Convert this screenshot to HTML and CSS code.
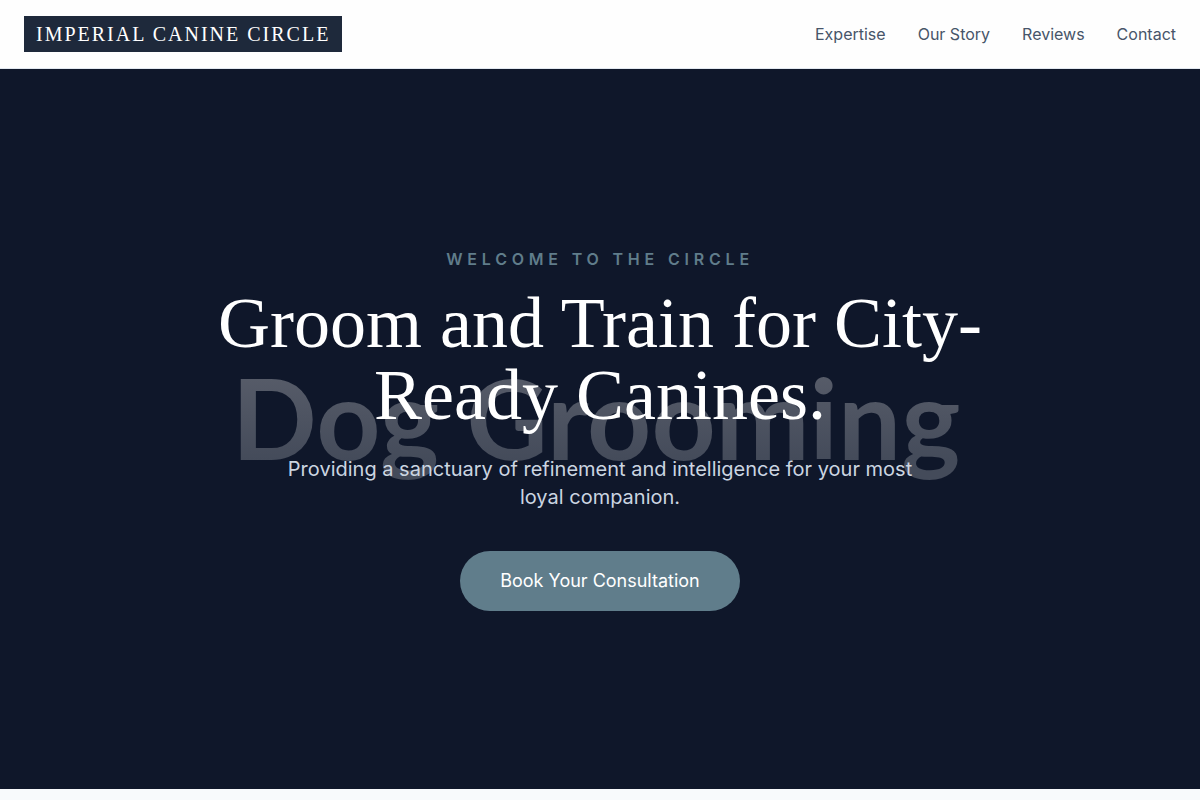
FILE: index.html
```html
<!DOCTYPE html>
<html lang="en">
<head>
<meta charset="utf-8">
<meta name="viewport" content="width=device-width, initial-scale=1">
<title>Imperial Canine Circle</title>
<link rel="stylesheet" href="styles.css">
</head>
<body>
<header class="site-header">
  <a class="brand" href="#top">IMPERIAL CANINE CIRCLE</a>
  <nav class="site-nav" aria-label="Main">
    <a href="#expertise">Expertise</a>
    <a href="#story">Our Story</a>
    <a href="#reviews">Reviews</a>
    <a href="#contact">Contact</a>
  </nav>
</header>
<main id="top">
  <section class="hero">
    <div class="hero-backdrop" aria-hidden="true"><span class="backdrop-word">Dog Grooming</span></div>
    <div class="hero-content">
      <p class="eyebrow">WELCOME TO THE CIRCLE</p>
      <h1 class="hero-title">Groom and Train for City-Ready Canines.</h1>
      <p class="hero-lead">Providing a sanctuary of refinement and intelligence for your most loyal companion.</p>
      <a class="hero-button" href="#contact">Book Your Consultation</a>
    </div>
  </section>
</main>
</body>
</html>
```
FILE: styles.css
```css
* {
  box-sizing: border-box;
}

body {
  margin: 0;
  background: #f8fafc;
  font-family: Inter, "Liberation Sans", sans-serif;
  font-size: 16px;
  line-height: 24px;
}

a {
  color: inherit;
  text-decoration: none;
}

.site-header {
  display: flex;
  align-items: center;
  justify-content: space-between;
  padding: 16px 24px;
  background: #fefefe;
  border-bottom: 1px solid #e2e8f0;
}

.brand {
  padding: 4px 12px;
  background: #1e293b;
  color: #fff;
  font-family: "Liberation Serif", serif;
  font-size: 20px;
  line-height: 28px;
  letter-spacing: 0.1em;
}

.site-nav {
  display: flex;
  gap: 32px;
  color: #475569;
}

.hero {
  position: relative;
  display: flex;
  align-items: center;
  justify-content: center;
  min-height: 90vh;
  padding: 24px;
  background: #0f172a;
  text-align: center;
}

.hero-backdrop {
  position: absolute;
  inset: 0;
  display: flex;
  align-items: center;
  justify-content: center;
  padding: 0 8px 24px 0;
  overflow: hidden;
}

.backdrop-word {
  background: linear-gradient(#575c69 20%, #444b5a 80%);
  background-clip: text;
  color: transparent;
  font-family: Lato, sans-serif;
  font-size: 112px;
  font-weight: 700;
  line-height: 144px;
  white-space: nowrap;
}

.hero-content {
  position: relative;
  display: flex;
  flex-direction: column;
  align-items: center;
  max-width: 896px;
}

.eyebrow {
  margin: 0 0 16px;
  color: #607d8b;
  font-weight: 600;
  letter-spacing: 0.3em;
}

.hero-title {
  margin: 0 0 24px;
  color: #fff;
  font-family: "Liberation Serif", serif;
  font-size: 72px;
  font-weight: 400;
  line-height: 72px;
}

.hero-lead {
  max-width: 672px;
  margin: 0 0 40px;
  color: #cbd5e1;
  font-size: 20px;
  line-height: 28px;
}

.hero-button {
  padding: 16px 40px;
  border-radius: 32px;
  background: #607d8b;
  color: #fff;
  font-size: 18px;
  line-height: 28px;
}
```
